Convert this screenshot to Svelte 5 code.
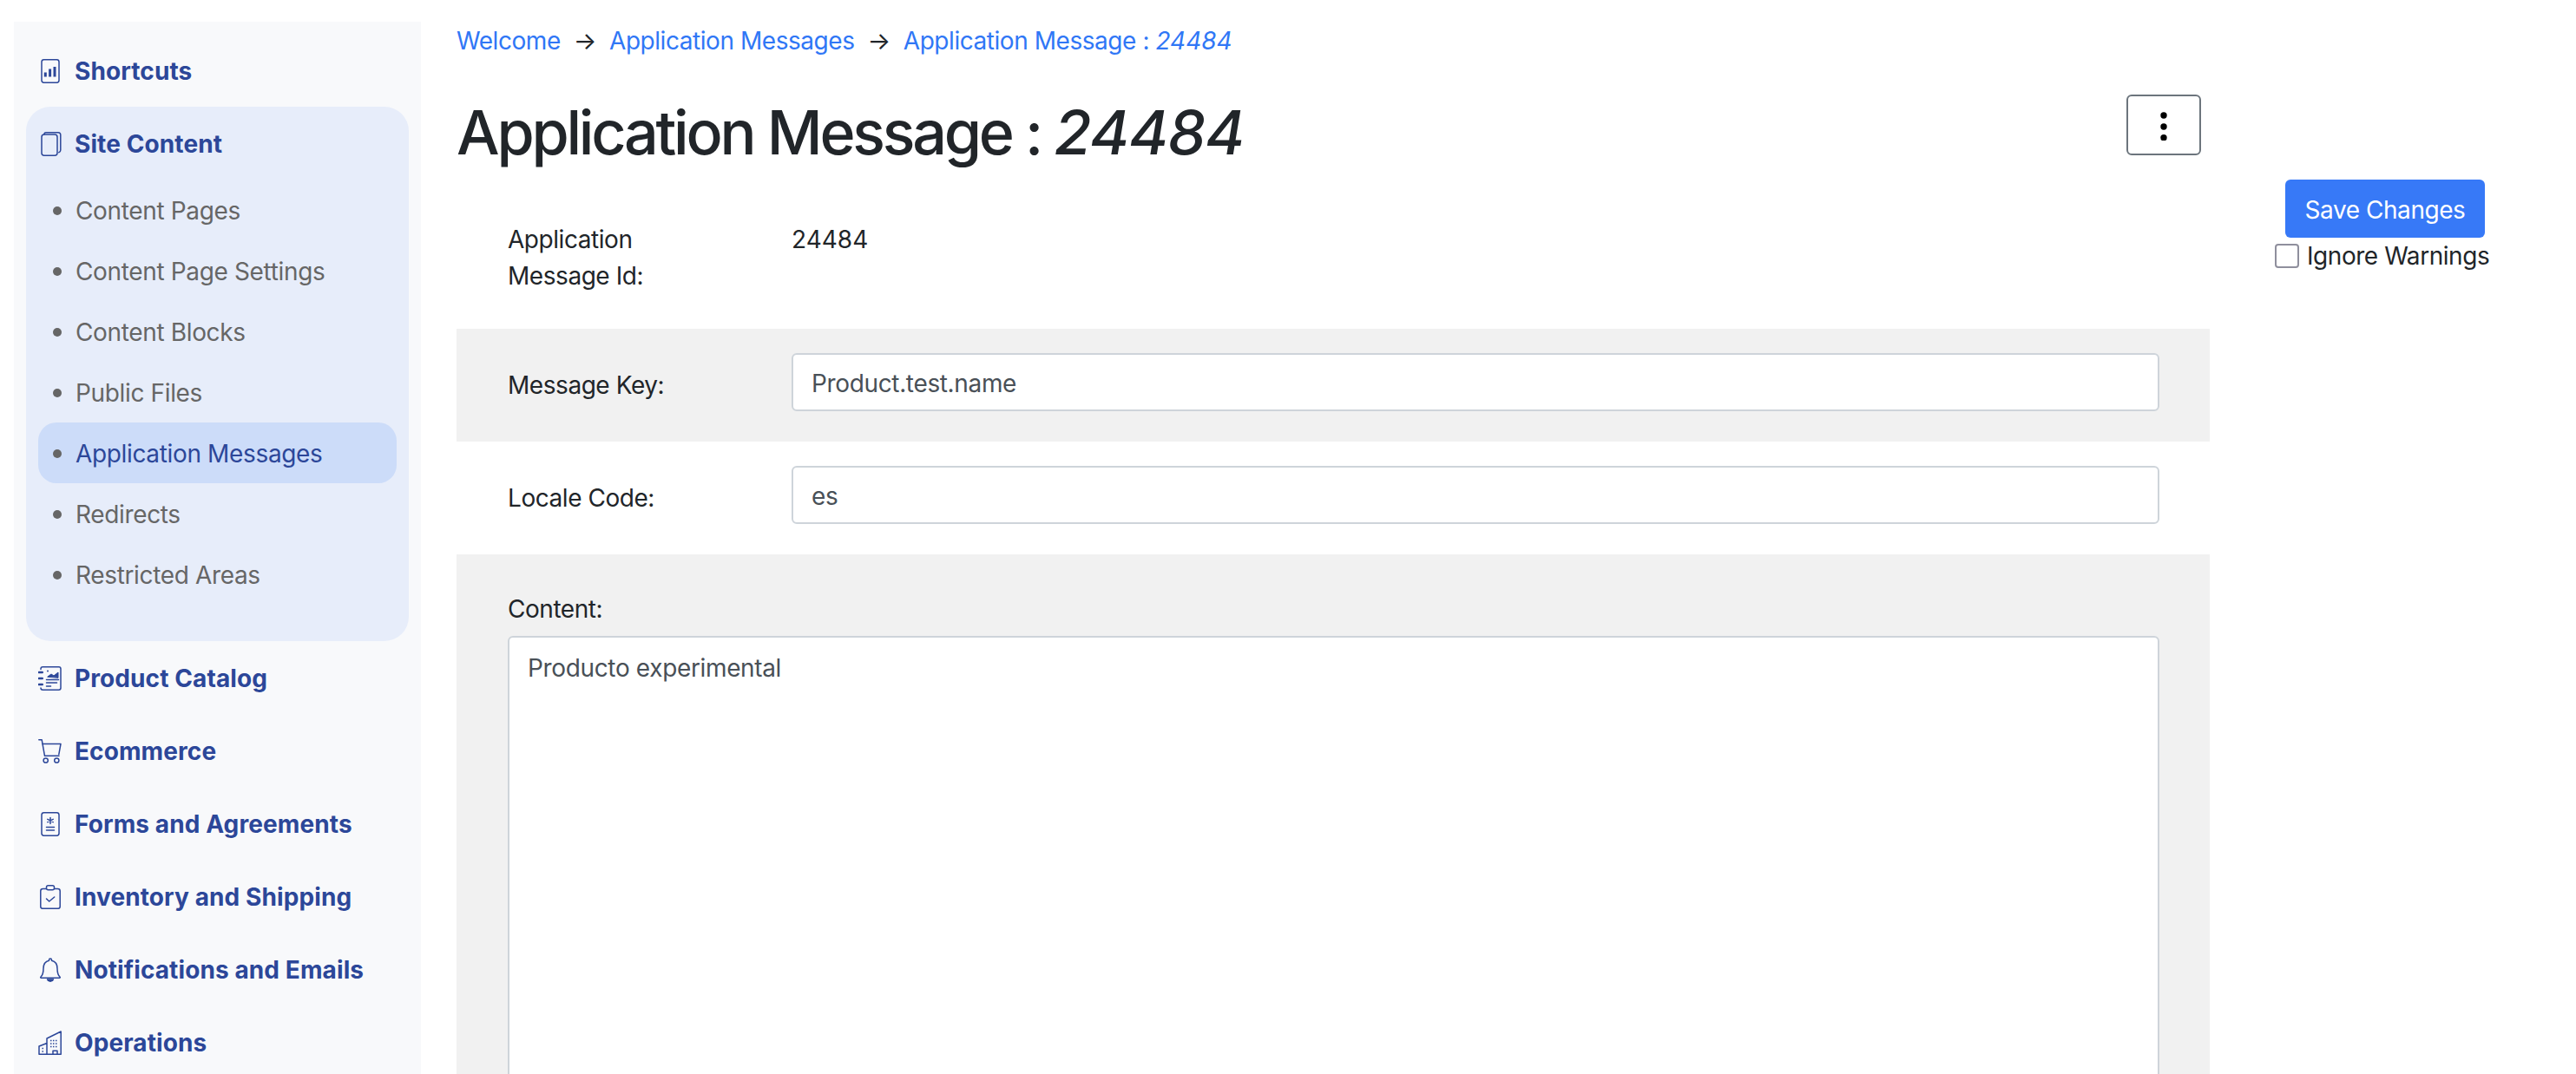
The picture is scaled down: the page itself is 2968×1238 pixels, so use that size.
<script lang="ts">
	const subItems = [
		'Content Pages',
		'Content Page Settings',
		'Content Blocks',
		'Public Files',
		'Application Messages',
		'Redirects',
		'Restricted Areas'
	];
	const lowerSections = [
		{ label: 'Product Catalog', icon: 'catalog' },
		{ label: 'Ecommerce', icon: 'cart' },
		{ label: 'Forms and Agreements', icon: 'form' },
		{ label: 'Inventory and Shipping', icon: 'clipboard' },
		{ label: 'Notifications and Emails', icon: 'bell' },
		{ label: 'Operations', icon: 'building' }
	];
</script>

{#snippet icon(name: string)}
	<svg class="nav-icon" viewBox="0 0 28 28" fill="none" stroke="currentColor" stroke-width="1.5" stroke-linecap="round" stroke-linejoin="round">
		{#if name === 'chart'}
			<rect x="4" y="0.8" width="20" height="26.400" rx="2.600" />
			<path d="M8.300 15.500v5M13.600 11.500v9M19 9v11.500" stroke-width="3" stroke-linecap="butt" />
		{:else if name === 'pages'}
			<rect x="4" y="3" width="18" height="24.200" rx="3" />
			<path d="M7 3V2.700C7 1.500 8 .8 9 .8h14c1.700 0 2.800 1.100 2.800 2.800v17.500c0 1.400-1 2.400-2 2.600" />
		{:else if name === 'catalog'}
			<path d="M3 3.500V3C3 1.700 4 .8 5.300.8h18.500c1.300 0 2.200.9 2.200 2.200v22c0 1.300-.9 2.200-2.200 2.200H5.300C4 27.200 3 26.300 3 25" />
			<path d="M.8 7h4M.8 14h4M.8 21h4" stroke-width="2.400" />
			<path d="M11 12l4-3 3 2 5-4v6z" fill="currentColor" stroke-width="1" />
			<path d="M9.500 15.500h14M9.500 19h12M9.500 23h5" />
			<circle cx="11" cy="5.500" r="1" fill="currentColor" stroke="none" />
		{:else if name === 'cart'}
			<path d="M.8.800h3.400l3.300 18.500h16.500" />
			<path d="M5 5.500h21l-2.200 12.200" />
			<circle cx="8.700" cy="24.500" r="2.600" />
			<circle cx="21.300" cy="24.500" r="2.600" />
		{:else if name === 'form'}
			<rect x="4" y="0.800" width="20" height="26.400" rx="2.600" />
			<path d="M14 6.500v7M10.800 8.300l6.400 3.400M17.200 8.300l-6.400 3.400M9.500 17.500h9M9.500 21h9" />
		{:else if name === 'clipboard'}
			<path d="M9 4.500H5.500C3.800 4.500 2.800 5.500 2.800 7v18c0 1.500 1 2.300 2.700 2.300h17c1.700 0 2.700-.8 2.700-2.300V7c0-1.500-1-2.500-2.700-2.500H19" />
			<rect x="9.500" y="0.800" width="9" height="5" rx="2" />
			<path d="M9.500 16l3.200 3 6-5" />
		{:else if name === 'bell'}
			<path d="M14 1c-.9 0-1.500.6-1.500 1.500v.8C7.800 4.300 6 8 6 12.500c0 4.800-1 7.700-3 9.500-.6.500-.3 1.300.5 1.300h21c.8 0 1.100-.8.500-1.300-2-1.800-3-4.700-3-9.500 0-4.500-1.800-8.200-6.500-9.200v-.8c0-.9-.6-1.500-1.500-1.500z" />
			<path d="M10.500 25h7c-.6 1.500-1.900 2.200-3.500 2.200s-2.900-.7-3.500-2.200z" fill="currentColor" />
		{:else if name === 'building'}
			<path d="M1 27.200V18l9-3.500V9L26.200 1v26.200zM10 14.500v12.700M17 27.200v-4h5v4" />
			<path d="M4.500 20.500h3M4.500 24h3M14 11.500h9M14 15h9M14 18.500h9" stroke-width="1.500" stroke-dasharray="1.500 1.500" stroke-linecap="butt" />
		{/if}
	</svg>
{/snippet}

<div class="page">
	<nav class="sidebar">
		<a class="section" href="#top">{@render icon('chart')}<span>Shortcuts</span></a>

		<div class="group">
			<a class="section" href="#top">{@render icon('pages')}<span>Site Content</span></a>
			<ul class="sub-list">
				{#each subItems as item}
					<li class="sub-item" class:active={item === 'Application Messages'}>
						<span class="dot"></span>
						<span>{item}</span>
					</li>
				{/each}
			</ul>
		</div>

		{#each lowerSections as section}
			<a class="section" href="#top">{@render icon(section.icon)}<span>{section.label}</span></a>
		{/each}
	</nav>

	<main class="main">
		<div class="breadcrumb">
			<a href="#top">Welcome</a>
			<span class="arrow">→</span>
			<a href="#top">Application Messages</a>
			<span class="arrow">→</span>
			<a href="#top">Application Message : <em>24484</em></a>
		</div>

		<div class="title-row">
			<h1>Application Message : <em>24484</em></h1>
			<button class="menu-btn" aria-label="More actions">
				<svg width="10" height="36" viewBox="0 0 10 36" fill="#000">
					<circle cx="5" cy="7" r="3.700" />
					<circle cx="5" cy="20" r="3.700" />
					<circle cx="5" cy="32.700" r="3.700" />
				</svg>
			</button>
		</div>

		<div class="row id-row">
			<div class="label narrow">Application Message Id:</div>
			<div class="value">24484</div>
		</div>
		<div class="row gray">
			<div class="label">Message Key:</div>
			<input class="field" type="text" value="Product.test.name" />
		</div>
		<div class="row">
			<div class="label">Locale Code:</div>
			<input class="field" type="text" value="es" />
		</div>
		<div class="block gray">
			<div class="label">Content:</div>
			<textarea class="area">Producto experimental</textarea>
		</div>
	</main>

	<aside class="actions">
		<button class="save">Save Changes</button>
		<label class="warn">
			<input type="checkbox" />
			<span>Ignore Warnings</span>
		</label>
	</aside>
</div>

<style>
	:global(body) {
		margin: 0;
		background: #fff;
		font-family: Inter, 'Liberation Sans', sans-serif;
		color: #212529;
	}

	.page {
		display: flex;
		align-items: flex-start;
		height: 1238px;
		overflow: hidden;
	}

	.sidebar {
		width: 469px;
		height: 1213px;
		margin: 25px 0 0 16px;
		padding-top: 15px;
		box-sizing: border-box;
		background: #f8f9fb;
		flex-shrink: 0;
		overflow: hidden;
	}

	.section {
		display: flex;
		align-items: center;
		height: 84px;
		padding-left: 28px;
		box-sizing: border-box;
		color: #2c4799;
		font-size: 28px;
		font-weight: 700;
		letter-spacing: 0.1px;
		text-decoration: none;
	}

	.nav-icon {
		width: 28px;
		height: 28px;
		margin-right: 14px;
		flex-shrink: 0;
	}

	.group {
		width: 441px;
		height: 616px;
		margin: -1px 0 1px 14px;
		padding-top: 1px;
		box-sizing: border-box;
		background: #e7edfa;
		border-radius: 28px;
	}

	.group .section {
		padding-left: 14px;
	}

	.sub-list {
		list-style: none;
		margin: -1px 0 0;
		padding: 0 14px;
	}

	.sub-item {
		display: flex;
		align-items: center;
		height: 70px;
		padding: 2px 0 0 17px;
		box-sizing: border-box;
		border-radius: 21px;
		color: #666;
		font-size: 28px;
		letter-spacing: -0.35px;
	}

	.sub-item.active {
		background: #ccdcf9;
		color: #2c4799;
	}

	.dot {
		width: 10px;
		height: 10px;
		margin-right: 16px;
		border-radius: 50%;
		background: #666;
		flex-shrink: 0;
	}

	.main {
		width: 2020px;
		margin-left: 41px;
		flex-shrink: 0;
	}

	.breadcrumb {
		display: flex;
		align-items: center;
		gap: 15px;
		height: 42px;
		margin-top: 26px;
		font-size: 28px;
		letter-spacing: -0.45px;
	}

	.breadcrumb a {
		color: #3077f6;
		text-decoration: none;
	}

	.breadcrumb em {
		letter-spacing: 0;
	}

	.arrow {
		color: #212529;
	}

	.title-row {
		display: flex;
		justify-content: space-between;
		align-items: flex-start;
		padding-right: 10px;
		margin: 41px 0 32px;
	}

	h1 {
		margin: 3px 0 0;
		font-size: 70px;
		font-weight: 500;
		line-height: 81px;
		letter-spacing: -3.25px;
	}

	h1 em {
		letter-spacing: -1px;
	}

	.menu-btn {
		display: flex;
		align-items: center;
		justify-content: center;
		width: 86px;
		height: 70px;
		padding: 0;
		background: #fff;
		border: 2px solid #6c757d;
		border-radius: 6px;
	}

	.row {
		display: flex;
		align-items: center;
		height: 130px;
		padding: 0 58px 0 59px;
		box-sizing: border-box;
	}

	.id-row {
		align-items: flex-start;
		height: 154px;
		padding-top: 30px;
	}

	.gray {
		background: #f1f1f1;
	}

	.label {
		width: 327px;
		flex-shrink: 0;
		font-size: 28px;
		line-height: 42px;
		letter-spacing: -0.45px;
	}

	.label.narrow {
		padding-right: 80px;
		box-sizing: border-box;
	}

	.value {
		font-size: 28px;
		line-height: 42px;
	}

	.field {
		flex: 1;
		align-self: flex-start;
		height: 67px;
		margin-top: 28px;
		box-sizing: border-box;
		padding: 2px 21px 0;
		border: 2px solid #ced4da;
		border-radius: 6px;
		background: #fff;
		color: #495057;
		font: inherit;
		font-size: 28px;
		letter-spacing: -0.35px;
		outline: none;
	}

	.block {
		padding: 42px 58px 0 59px;
		height: 700px;
		box-sizing: border-box;
	}

	.area {
		display: block;
		width: 100%;
		height: 640px;
		margin-top: 10px;
		box-sizing: border-box;
		padding: 14px 21px;
		border: 2px solid #ced4da;
		border-radius: 6px;
		background: #fff;
		color: #495057;
		font: inherit;
		font-size: 28px;
		line-height: 42px;
		letter-spacing: -0.35px;
		resize: none;
		outline: none;
	}

	.actions {
		display: flex;
		flex-direction: column;
		align-items: flex-start;
		margin: 207px 0 0 75px;
		font-size: 28px;
		letter-spacing: -0.45px;
	}

	.save {
		width: 230px;
		height: 67px;
		margin-left: 12px;
		padding: 2px 0 0;
		background: #3779f7;
		border: none;
		border-radius: 6px;
		color: #fff;
		font: inherit;
		letter-spacing: -0.45px;
	}

	.warn {
		display: flex;
		align-items: center;
		gap: 9px;
		margin-top: 7px;
		line-height: 28px;
		white-space: nowrap;
	}

	.warn input {
		width: 28px;
		height: 28px;
		margin: 0;
		appearance: none;
		background: #fff;
		border: 2px solid #8f8f9d;
		border-radius: 4px;
	}
</style>
